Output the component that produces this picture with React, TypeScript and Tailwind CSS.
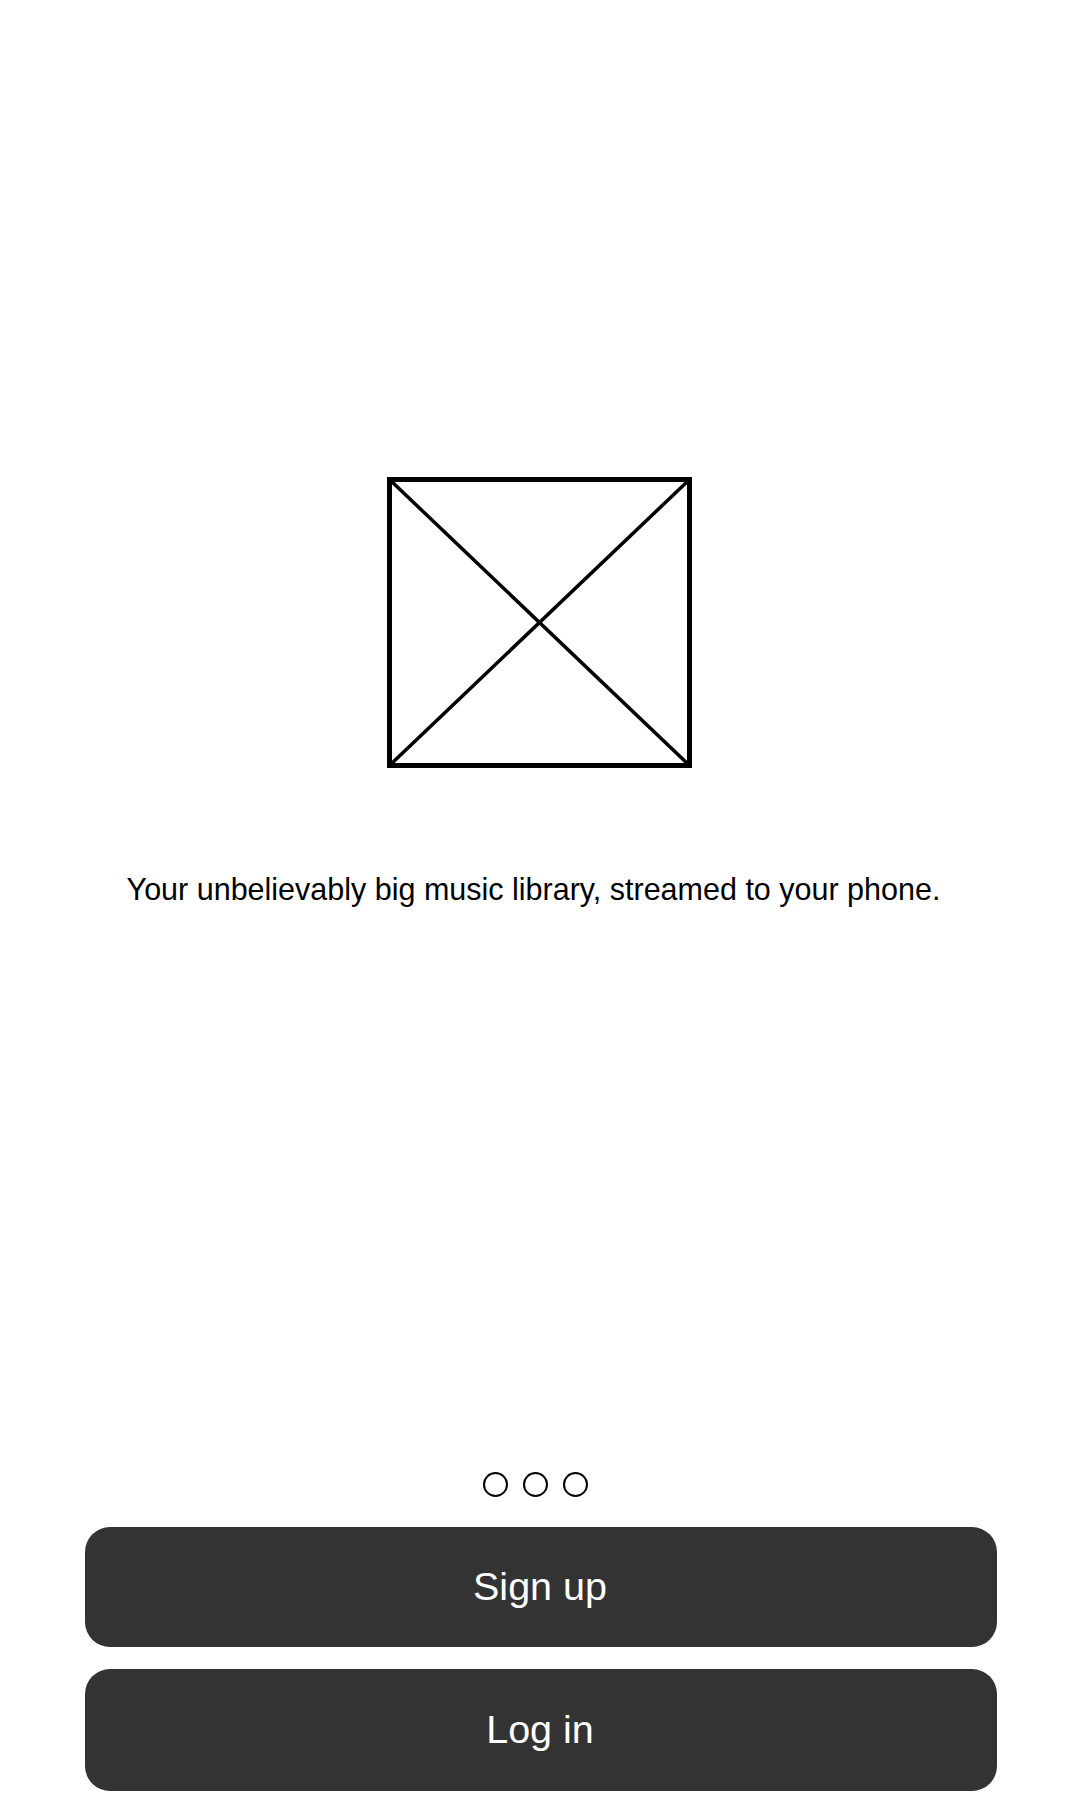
import React from "react";

export default function App() {
  return (
    <div
      className="flex flex-col items-center h-[1800px] w-full bg-white"
      style={{ fontFamily: '"Liberation Sans", Arial, sans-serif' }}
    >
      <svg
        width="305"
        height="291"
        viewBox="0 0 305 291"
        className="block mt-[477px] mr-[2px]"
      >
        <rect x="2.5" y="2.5" width="300" height="286" fill="none" stroke="#000" strokeWidth="5" />
        <line x1="2.5" y1="2.5" x2="302.5" y2="288.5" stroke="#000" strokeWidth="3.5" />
        <line x1="302.5" y1="2.5" x2="2.5" y2="288.5" stroke="#000" strokeWidth="3.5" />
      </svg>

      <p className="mt-[104px] mr-[13px] text-[30.5px] leading-[34px] text-black whitespace-nowrap">
        Your unbelievably big music library, streamed to your phone.
      </p>

      <div className="mt-[566px] mr-[10px] flex flex-row gap-[15px]">
        <div className="w-[25px] h-[25px] rounded-full border-[2.5px] border-black" />
        <div className="w-[25px] h-[25px] rounded-full border-[2.5px] border-black" />
        <div className="w-[25px] h-[25px] rounded-full border-[2.5px] border-black" />
      </div>

      <button className="mt-[30px] ml-[2px] w-[912px] h-[120px] rounded-[25px] bg-[#333333] text-white text-[39.5px] leading-none flex items-center justify-center">
        <span className="mr-[2px]">Sign up</span>
      </button>
      <button className="mt-[22px] ml-[2px] w-[912px] h-[122px] rounded-[25px] bg-[#333333] text-white text-[39.5px] leading-none flex items-center justify-center">
        <span className="mr-[2px]">Log in</span>
      </button>
    </div>
  );
}
